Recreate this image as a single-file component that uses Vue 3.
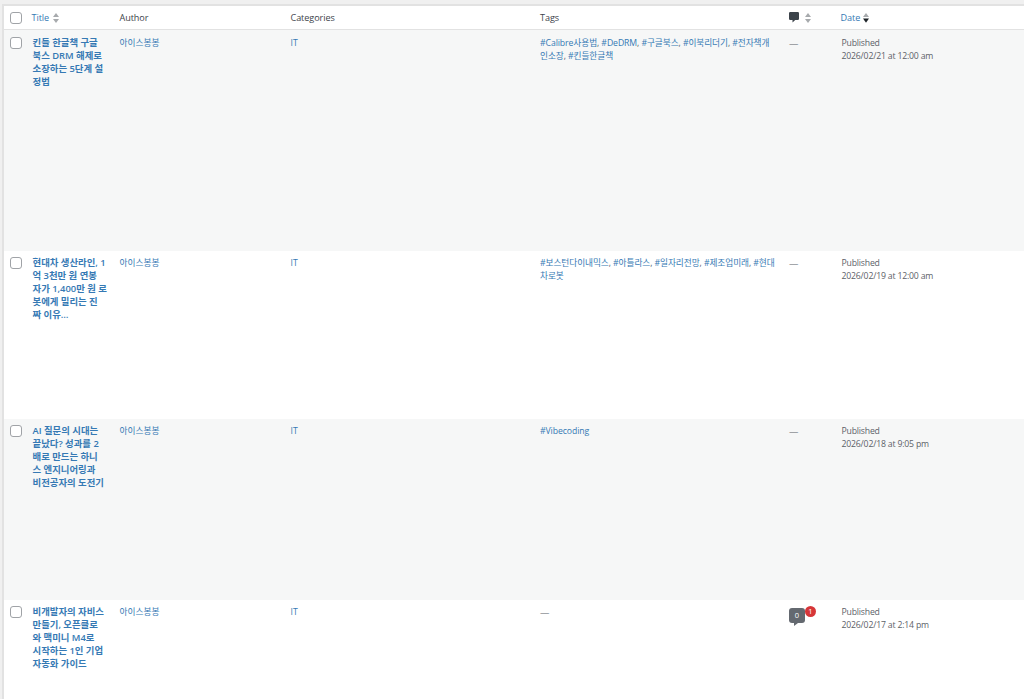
<script setup>
import { ref } from 'vue'

const posts = ref([
  {
    id: 1,
    height: 221,
    title: ['킨들 한글책 구글', '북스 DRM 해제로', '소장하는 5단계 설', '정법'],
    tags: [['#Calibre사용법', ', ', '#DeDRM', ', ', '#구글북스', ', ', '#이북리더기', ', ', '#전자책개'], ['인소장', ', ', '#킨들한글책']],
    date: '2026/02/21 at 12:00 am'
  },
  {
    id: 2,
    height: 168,
    title: ['현대차 생산라인, 1', '억 3천만 원 연봉', '자가 1,400만 원 로', '봇에게 밀리는 진', '짜 이유…'],
    tags: [['#보스턴다이내믹스', ', ', '#아틀라스', ', ', '#일자리전망', ', ', '#제조업미래', ', ', '#현대'], ['차로봇']],
    date: '2026/02/19 at 12:00 am'
  },
  {
    id: 3,
    height: 181,
    title: ['AI 질문의 시대는', '끝났다? 성과를 2', '배로 만드는 하니', '스 엔지니어링과', '비전공자의 도전기'],
    tags: [['#Vibecoding']],
    date: '2026/02/18 at 9:05 pm'
  },
  {
    id: 4,
    height: 110,
    title: ['비개발자의 자비스', '만들기, 오픈클로', '와 맥미니 M4로', '시작하는 1인 기업', '자동화 가이드'],
    tags: [],
    pending: 1,
    date: '2026/02/17 at 2:14 pm'
  }
])
const checked = ref([])
</script>

<template>
  <div class="page">
    <div class="table">
      <div class="row head">
        <div class="check"><input type="checkbox"></div>
        <div class="title-head link">
          <span>Title</span>
          <svg class="sort" viewBox="0 0 6 10"><path class="off" d="M0 4L3 0L6 4ZM0 6H6L3 10Z" /></svg>
        </div>
        <div>Author</div>
        <div>Categories</div>
        <div>Tags</div>
        <div class="comment-head">
          <svg class="bubble" viewBox="0 0 10 11"><path d="M1.2 0H8.8Q10 0 10 1.2V6.8Q10 8 8.8 8H6.2L3.5 10.6V8H1.2Q0 8 0 6.8V1.2Q0 0 1.2 0Z" /></svg>
          <svg class="sort" viewBox="0 0 6 10"><path class="off" d="M0 4L3 0L6 4ZM0 6H6L3 10Z" /></svg>
        </div>
        <div class="date-head link">
          <span>Date</span>
          <svg class="sort" viewBox="0 0 6 10"><path class="off" d="M0 4L3 0L6 4Z" /><path class="on" d="M0 5.5H6L3 9.8Z" /></svg>
        </div>
      </div>
      <div v-for="post in posts" :key="post.id" class="row post" :style="{ height: post.height + 'px' }">
        <div class="check"><input v-model="checked" type="checkbox" :value="post.id"></div>
        <div class="title link">
          <div v-for="line in post.title" :key="line">{{ line }}</div>
        </div>
        <div class="link">아이스봉봉</div>
        <div class="link">IT</div>
        <div class="tags">
          <div v-for="(line, i) in post.tags" :key="i" class="tag-line">
            <span v-for="(part, j) in line" :key="j" :class="{ link: part !== ', ' }">{{ part }}</span>
          </div>
          <span v-if="!post.tags.length" class="dash">—</span>
        </div>
        <div class="comments">
          <div v-if="post.pending" class="count">
            <span class="approved">0</span>
            <span class="pending">{{ post.pending }}</span>
          </div>
          <span v-else class="dash">—</span>
        </div>
        <div class="date">
          <div>Published</div>
          <div>{{ post.date }}</div>
        </div>
      </div>
    </div>
  </div>
</template>

<style>
body {
  background: #f0f0f0;
}
</style>

<style scoped>
.page {
  box-sizing: border-box;
  height: 699px;
  padding: 4px 0 0 2px;
  overflow: hidden;
  background: #f0f0f0;
  font-family: "Open Sans", "Noto Sans CJK KR", sans-serif;
  font-size: 8.7px;
  line-height: 13px;
  color: #5c6168;
}
.table {
  border: 2px solid #e2e2e2;
  border-right: 0;
  background: #fff;
}
.row {
  display: grid;
  grid-template-columns: 27.5px 88px 171px 249.5px 249px 51.5px 1fr;
  box-sizing: border-box;
  white-space: nowrap;
}
.head {
  height: 25px;
  align-items: center;
  border-bottom: 2px solid #e2e2e2;
  font-size: 9.1px;
  letter-spacing: -0.08px;
  color: #3c434a;
}
.post {
  padding-top: 6px;
}
.post:nth-child(even) {
  background: #f6f7f7;
}
.post:nth-child(2) {
  margin-top: -1px;
  padding-top: 7px;
}
.link {
  color: #3579b4;
}
.check {
  display: flex;
  padding-left: 6px;
}
.check input {
  appearance: none;
  box-sizing: border-box;
  width: 12px;
  height: 12px;
  margin: 0;
  border: 1px solid #a0a3a7;
  border-radius: 3px;
  background: #fff;
}
.title-head,
.date-head,
.comment-head {
  display: flex;
  align-items: center;
  gap: 4px;
}
.date-head {
  gap: 3px;
}
.sort {
  width: 6px;
  height: 10px;
}
.off {
  fill: #a7aaad;
}
.on {
  fill: #1d2327;
}
.bubble {
  width: 10px;
  height: 11px;
  margin-right: 1.5px;
  fill: #3c434a;
}
.title {
  margin-top: -1px;
  padding-left: 1px;
  font-size: 9.4px;
  font-weight: 600;
  line-height: 13.1px;
}
.tag-line {
  white-space: pre;
  letter-spacing: -0.09px;
}
.dash {
  font-size: 9.4px;
}
.date {
  padding-left: 1px;
  letter-spacing: -0.19px;
}
.count {
  position: relative;
  width: 16px;
  height: 15px;
  margin-top: 2px;
  border-radius: 3px;
  background: #646970;
  color: #fff;
  font-size: 7.5px;
  line-height: 15px;
  text-align: center;
}
.count::after {
  content: "";
  position: absolute;
  left: 5px;
  top: 15px;
  border-top: 3px solid #646970;
  border-right: 4px solid transparent;
}
.pending {
  position: absolute;
  left: 16px;
  top: -2px;
  width: 11px;
  height: 11px;
  border-radius: 50%;
  background: #d63638;
  font-size: 7.5px;
  line-height: 11px;
}
</style>
